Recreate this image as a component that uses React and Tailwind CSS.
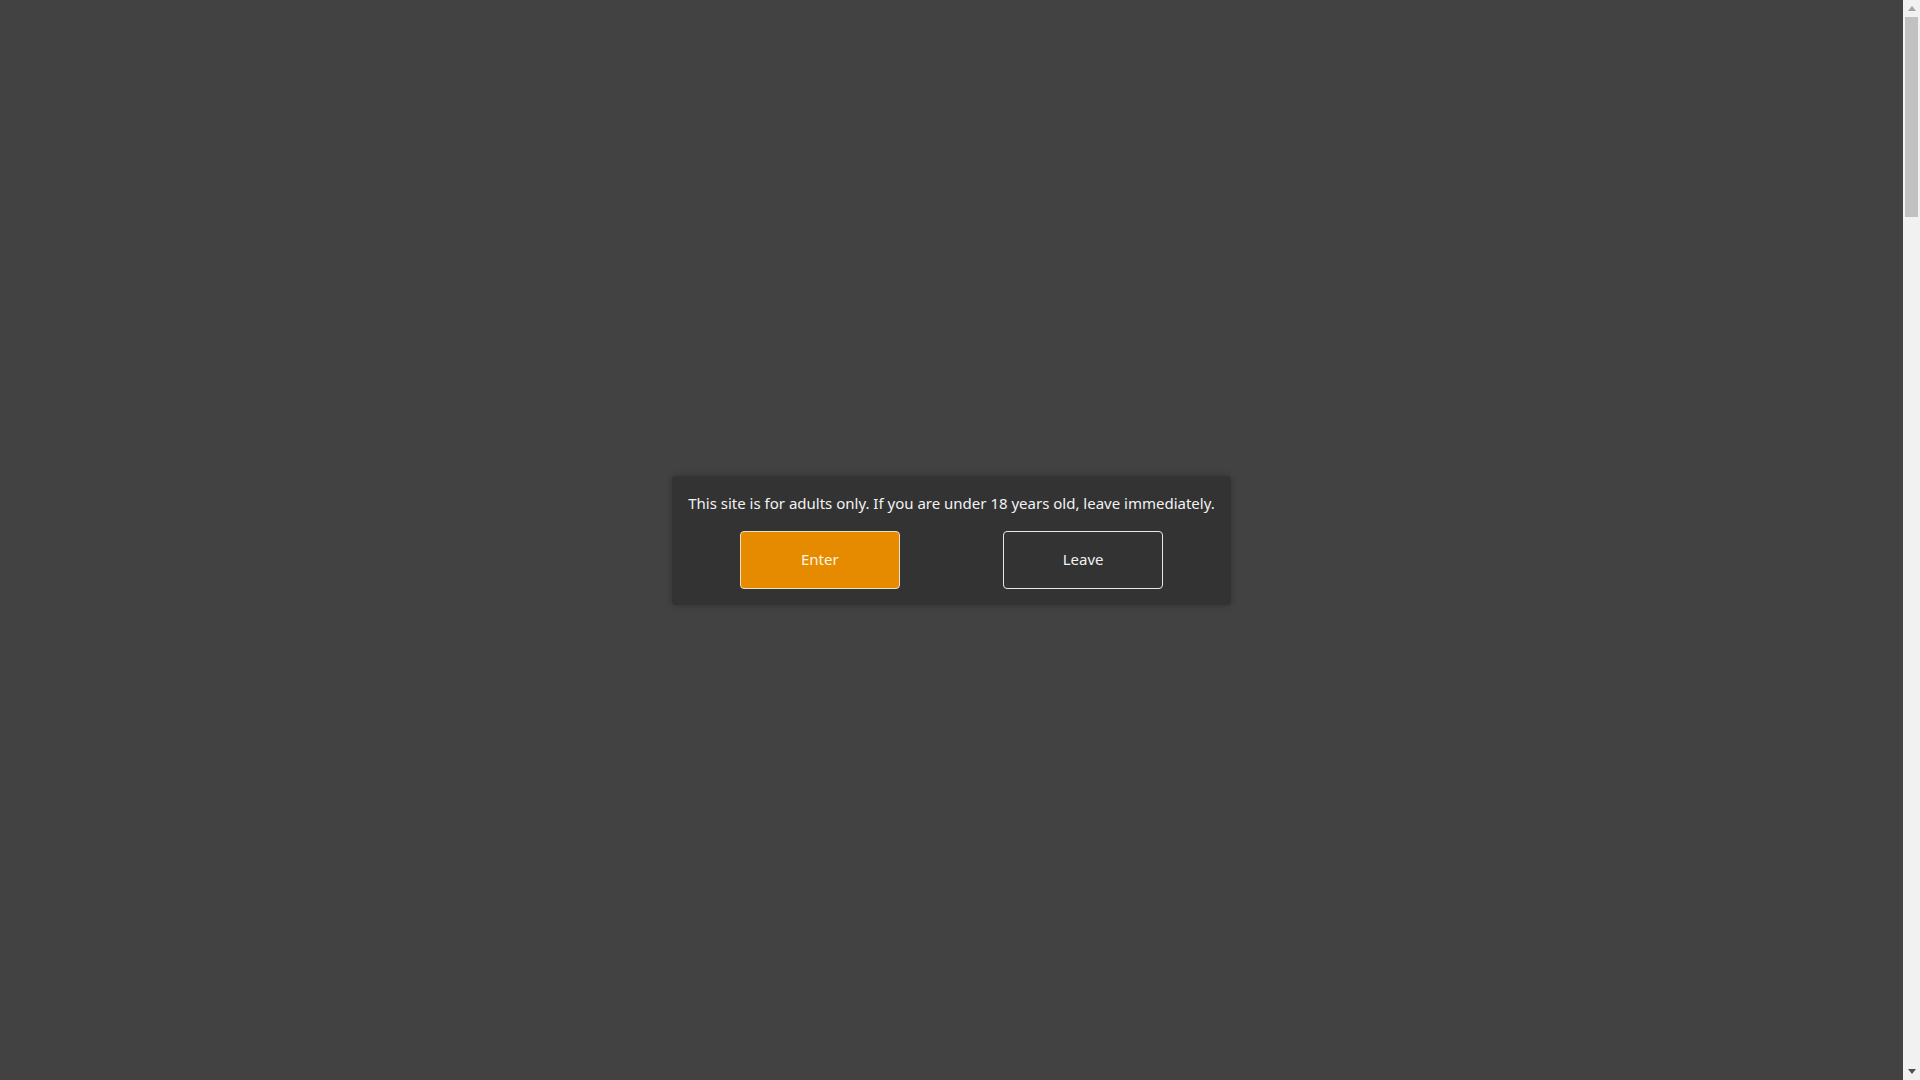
import React, { useState } from "react";

const AgeGate = ({ onEnter, onLeave }) => {
  return (
    <div className="bg-[#333333] rounded-[4px] px-4 pt-[15px] pb-4 shadow-[0_0_6px_rgba(0,0,0,0.25)]">
      <p className="text-[15px] leading-6 text-[#f2f2f2] whitespace-nowrap">
        This site is for adults only. If you are under 18 years old, leave immediately.
      </p>
      {/* buttons */}
      <div className="mt-4 flex justify-around">
        <button
          onClick={onEnter}
          className="w-[160px] h-[58px] rounded-[4px] border border-[#f0e0c0] bg-[#e68a00] text-[15px] text-[#fff5e0] hover:bg-[#cc7a00]"
        >
          Enter
        </button>
        <button
          onClick={onLeave}
          className="w-[160px] h-[58px] rounded-[4px] border border-[#e8e8e8] bg-transparent text-[15px] text-[#f2f2f2] hover:bg-[#3d3d3d]"
        >
          Leave
        </button>
      </div>
    </div>
  );
};

// page scrollbar (classic style)
const Scrollbar = () => {
  return (
    <div className="w-[17px] h-full flex flex-col bg-[#f1f1f1]">
      <div className="h-[17px] flex items-center justify-center">
        <svg width="8" height="5" viewBox="0 0 8 5">
          <polygon points="4,0 8,5 0,5" fill="#a3a3a3" />
        </svg>
      </div>
      <div className="flex-1 px-[2px]">
        <div className="h-[200px] bg-[#c1c1c1]" />
      </div>
      <div className="h-[17px] flex items-center justify-center">
        <svg width="8" height="5" viewBox="0 0 8 5">
          <polygon points="0,0 8,0 4,5" fill="#505050" />
        </svg>
      </div>
    </div>
  );
};

const App = () => {
  const [open, setOpen] = useState(true);
  return (
    <div className="h-screen flex bg-[#424242] font-['Noto_Sans',sans-serif]">
      <div className="flex-1 flex items-center justify-center">
        {open && (
          <AgeGate
            onEnter={() => {
              setOpen(false);
            }}
            onLeave={() => {
              setOpen(true);
            }}
          />
        )}
      </div>
      <Scrollbar />
    </div>
  );
};

export default App;
